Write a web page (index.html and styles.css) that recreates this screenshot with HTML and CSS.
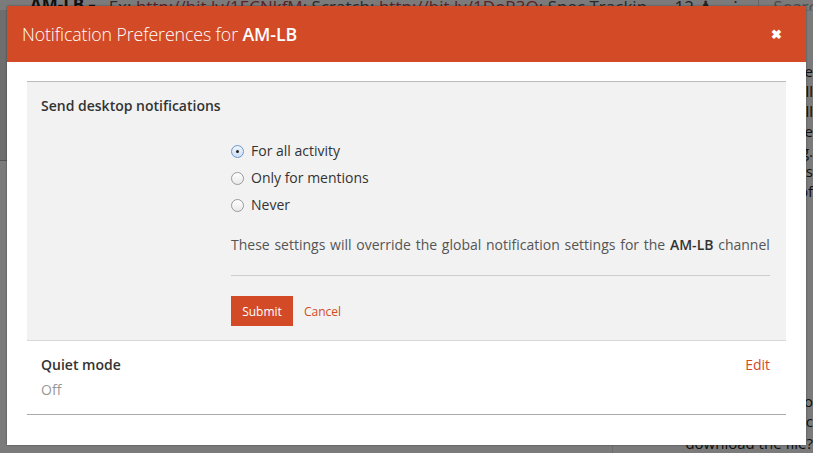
FILE: index.html
```html
<!DOCTYPE html>
<html>
<head>
<meta charset="utf-8">
<link rel="stylesheet" href="styles.css">
</head>
<body>
<div class="app">
  <div class="topbar">
    <span class="chan">AM-LB <span class="caret">&#9662;</span></span>
    <span class="topic">Ex: <span class="lnk">http://bit.ly/1ECNkfM</span>; Scratch: <span class="lnk">http://bit.ly/1DoR3O</span>; Spec Trackin...</span>
    <span class="count">12 &#9823;</span>
    <span class="more">&#8942;</span>
    <span class="search">Search</span>
  </div>
  <div class="main">
    <div class="leftstrip"></div>
    <div class="content"></div>
    <div class="rightpanel">
      <p>the</p><p>will</p><p>will</p><p>the</p><p>big.</p><p>was</p><p>of</p>
      <div class="rp-gap"></div>
      <p>to</p><p>, c</p><p class="dl">download the file?</p>
    </div>
  </div>
</div>
<div class="overlay"></div>
<div class="modal">
  <div class="modal-header">
    <h1 class="modal-title">Notification Preferences for <b>AM-LB</b></h1>
    <span class="close">&#x2716;</span>
  </div>
  <div class="modal-body">
    <div class="pref pref-open">
      <div class="pref-title">Send desktop notifications</div>
      <div class="settings">
        <div class="radios">
          <label class="radio"><span class="dot checked"></span>For all activity</label>
          <label class="radio"><span class="dot"></span>Only for mentions</label>
          <label class="radio"><span class="dot"></span>Never</label>
        </div>
        <p class="note">These settings will override the global notification settings for the <b>AM-LB</b> channel</p>
        <div class="actions">
          <button class="submit">Submit</button>
          <a class="cancel">Cancel</a>
        </div>
      </div>
    </div>
    <div class="pref pref-closed">
      <div class="pref-row">
        <div>
          <div class="pref-title">Quiet mode</div>
          <div class="pref-value">Off</div>
        </div>
        <a class="edit">Edit</a>
      </div>
    </div>
  </div>
</div>
</body>
</html>
```

FILE: styles.css
```css
* { box-sizing: border-box; }
html, body { margin: 0; padding: 0; }
body {
  width: 813px;
  height: 453px;
  overflow: hidden;
  font-family: "Open Sans", "Noto Sans", sans-serif;
  color: #333;
  background: #f7f7f7;
}
.app { width: 813px; height: 453px; display: flex; flex-direction: column; }
.topbar {
  height: 16px;
  display: flex;
  align-items: flex-end;
  gap: 14px;
  padding-left: 30px;
  font-size: 17px;
  line-height: 22px;
  white-space: nowrap;
  overflow: hidden;
  border-bottom: 1px solid #ddd;
}
.topbar > span { margin-bottom: -8px; }
.chan { font-weight: 700; color: #222; }
.caret { font-size: 12px; }
.topic { color: #555; font-size: 17px; }
.lnk { color: #b44; }
.count { color: #444; }
.more { color: #555; }
.search { color: #999; border-left: 1px solid #ccc; padding-left: 14px; }
.main { flex: 1; display: flex; }
.leftstrip { width: 7px; background: #dcdcdc; border-bottom: 1px solid #aaa; height: 150px; }
.content { flex: 1; border-right: 1px solid #ddd; }
.rightpanel { width: 200px; padding: 50px 0 0 12px; font-size: 15px; line-height: 20px; color: #222; text-align: right; padding-right: 0; }
.rightpanel p { margin: 0; }
.rp-gap { height: 190px; }
.dl { margin-top: 2px !important; }

.overlay {
  position: absolute;
  inset: 0;
  background: rgba(0,0,0,0.5);
}
.modal {
  position: absolute;
  left: 7px;
  top: 6px;
  width: 799px;
  height: 439px;
  background: #fff;
  box-shadow: 0 0 2px rgba(0,0,0,0.4);
}
.modal-header {
  height: 56px;
  background: #d34a26;
  color: #fff;
  display: flex;
  align-items: center;
  justify-content: space-between;
  padding: 0 24px 0 15px;
}
.modal-title {
  margin: 0;
  font-size: 17.75px;
  font-weight: 300;
  letter-spacing: -0.1px;
}
.modal-title b { font-weight: 600; }
.close { font-size: 13px; font-weight: 700; }
.modal-body { padding: 19px 20px 0 20px; }
.pref { border-top: 1px solid #bbb; }
.pref-open {
  background: #f2f2f2;
  padding: 14px 16px 14px 14px;
}
.pref-title { font-size: 14px; font-weight: 600; line-height: 20px; color: #333; }
.settings { margin-left: 190px; padding-top: 25px; }
.radios { display: flex; flex-direction: column; gap: 7px; }
.radio { display: flex; align-items: center; gap: 7px; font-size: 14px; line-height: 20px; color: #333; }
.dot {
  width: 13px; height: 13px;
  border-radius: 50%;
  border: 1px solid #9a9a9a;
  background: linear-gradient(#fff, #e9e9e9);
  position: relative;
}
.dot.checked {
  border-color: #6f95c9;
  background: linear-gradient(#eef4fc, #cfe0f6);
}
.dot.checked::after {
  content: "";
  position: absolute;
  left: 4px; top: 4px;
  width: 3px; height: 3px;
  border-radius: 50%;
  background: #222;
}
.note {
  margin: 20px 0 0 0;
  font-size: 14px;
  word-spacing: 1.1px;
  line-height: 20px;
  color: #555;
  white-space: nowrap;
  padding-bottom: 20px;
  border-bottom: 1px solid #ccc;
}
.note b { font-weight: 600; color: #333; }
.actions { display: flex; align-items: center; gap: 11px; margin-top: 20px; }
.submit {
  font-family: inherit;
  font-size: 12px;
  color: #fff;
  background: #d34a26;
  border: 0;
  height: 30px;
  padding: 0 10px;
  width: 62px;
}
.cancel { font-size: 12px; color: #d34a26; }
.pref-closed {
  border-top: 1px solid #d8d8d8;
  border-bottom: 1px solid #aaa;
  padding: 14px 16px 14px 14px;
}
.pref-row { display: flex; justify-content: space-between; align-items: flex-start; }
.pref-value { font-size: 14px; color: #999; line-height: 20px; margin-top: 5px; }
.edit { font-size: 14px; color: #d34a26; line-height: 20px; }
```
